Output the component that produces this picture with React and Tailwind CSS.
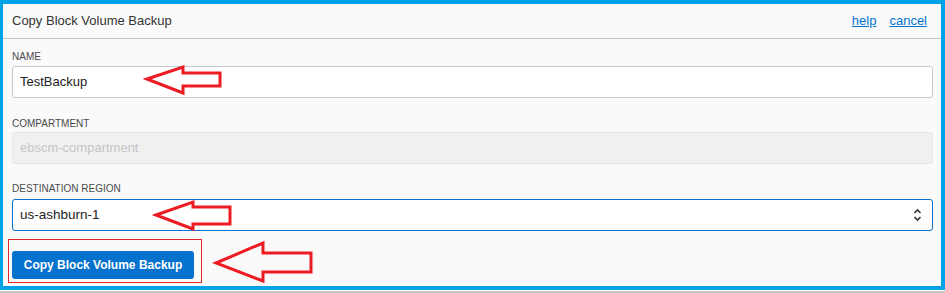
import React from "react";

const font = { fontFamily: '"Liberation Sans", Arial, sans-serif' };

function Label({ children, className = "" }) {
  return (
    <div className={`text-[10px] leading-[12px] uppercase text-[#4a4a4a] ${className}`}>
      {children}
    </div>
  );
}

export default function App() {
  return (
    <div className="relative w-[945px] h-[293px] bg-white" style={font}>
      <div className="h-[290px] border-[#00a3e8] border-l-[3px] border-t-4 border-r-4 border-b-4 bg-[#fafafa] flex flex-col">
        <div className="h-[35px] border-b border-[#c4c6ca] flex items-center justify-between pl-[9px] pr-[14px]">
          <div className="text-[13px] text-[#333]">Copy Block Volume Backup</div>
          <div className="flex gap-[13px] text-[13px] text-[#0572ce]">
            <a className="underline cursor-pointer">help</a>
            <a className="underline cursor-pointer">cancel</a>
          </div>
        </div>
        <div className="pl-[9px] pr-[8px] pt-[12px] flex flex-col">
          <Label className="mb-[3px]">Name</Label>
          <div className="h-[32px] rounded-[3px] border border-[#c4c9cf] bg-white flex items-center pl-[7px] text-[13px] text-[#222]">
            TestBackup
          </div>
          <Label className="mt-[20px] mb-[2px]">Compartment</Label>
          <div className="h-[32px] rounded-[3px] border border-[#e6e6e6] bg-[#f0f0f0] flex items-center pl-[7px] text-[13px] text-[#c5c5c5]">
            ebscm-compartment
          </div>
          <Label className="mt-[19px] mb-[4px]">Destination Region</Label>
          <div className="h-[32px] rounded-[3px] border border-[#0572ce] bg-white flex items-center justify-between pl-[7px] pr-[10px] text-[13.5px] text-[#222]">
            <span>us-ashburn-1</span>
            <svg width="9" height="14" viewBox="0 0 9 14" fill="none" stroke="#333" strokeWidth="1.6">
              <path d="M1.5 5 L4.5 2 L7.5 5" />
              <path d="M1.5 9 L4.5 12 L7.5 9" />
            </svg>
          </div>
          <div className="mt-[8px] -ml-[4px] w-[194px] h-[44px] border border-[#e3262d] pl-[3px] pt-[11px]">
            <button className="w-[182px] h-[28px] rounded-[3px] bg-[#0572ce] text-white text-[12px] font-bold flex items-center justify-center">
              Copy Block Volume Backup
            </button>
          </div>
        </div>
      </div>
      <div className="mt-px h-[2px] bg-[#c6c6c6]" />
      <svg className="absolute left-0 top-0 pointer-events-none" width="945" height="293" fill="none" stroke="#ed1c24" strokeWidth="3" strokeLinejoin="miter">
        <polygon points="147,79 183,67 183,73 220,73 220,86 183,86 183,93" />
        <polygon points="156,215 193,202 193,207 230,207 230,224 193,224 193,229" />
        <polygon points="216,263 263,243 263,253 311,253 311,272 263,272 263,281" />
      </svg>
    </div>
  );
}
